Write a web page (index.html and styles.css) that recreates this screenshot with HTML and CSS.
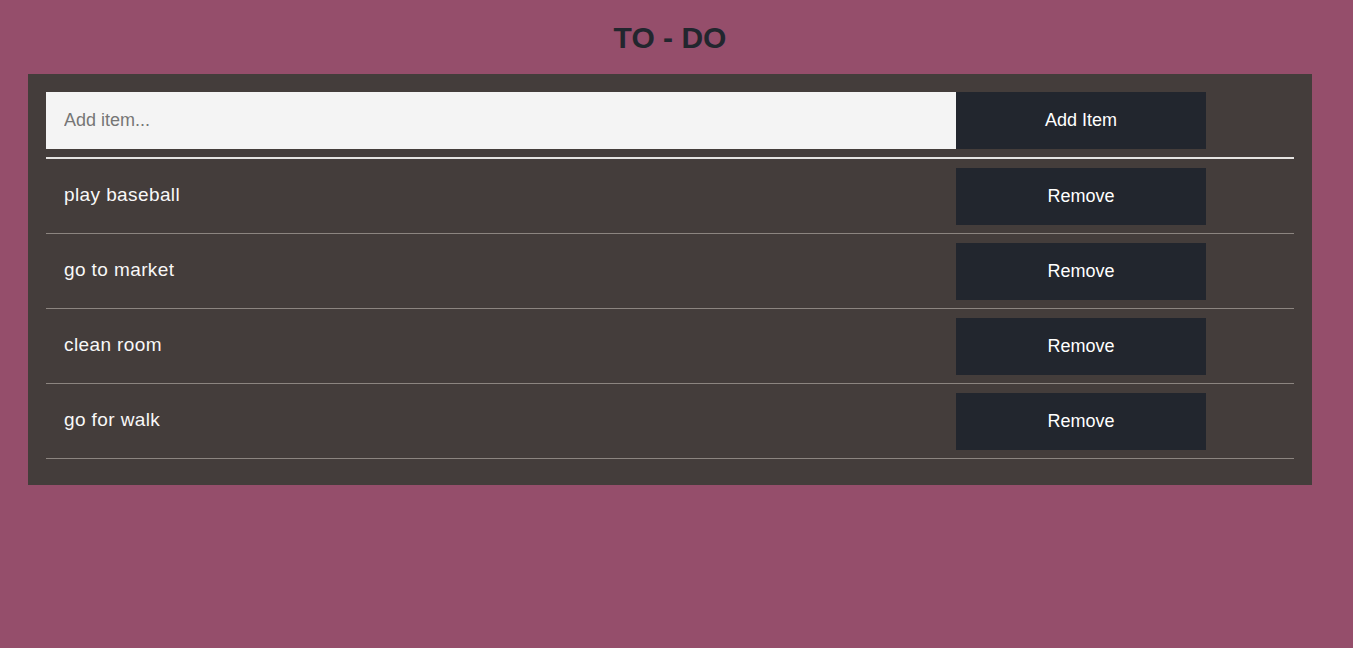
FILE: index.html
```html
<!DOCTYPE html>
<html lang="en">
<head>
<meta charset="utf-8">
<title>TO - DO</title>
<link rel="stylesheet" href="styles.css">
</head>
<body>
  <main class="page">
    <h1 class="title">TO - DO</h1>
    <div class="panel">
      <form class="add-row" onsubmit="return false">
        <input class="add-input" type="text" placeholder="Add item...">
        <button class="btn" type="submit">Add Item</button>
      </form>
      <ul class="list">
        <li class="item"><span class="item-text">play baseball</span><button class="btn">Remove</button></li>
        <li class="item"><span class="item-text">go to market</span><button class="btn">Remove</button></li>
        <li class="item"><span class="item-text">clean room</span><button class="btn">Remove</button></li>
        <li class="item"><span class="item-text">go for walk</span><button class="btn">Remove</button></li>
      </ul>
    </div>
  </main>
</body>
</html>
```

FILE: styles.css
```css
html, body {
  margin: 0;
  padding: 0;
}
body {
  background: #954e6b;
  font-family: "Liberation Sans", Arial, sans-serif;
  min-height: 648px;
}
.page {
  margin: 0 41px 0 28px;
}
.title {
  margin: 0;
  padding: 21px 0 19px;
  font-size: 30px;
  line-height: 34px;
  font-weight: bold;
  color: #22262e;
  text-align: center;
}
.panel {
  background: #443d3b;
  padding: 18px 18px 26px;
}
.add-row {
  display: flex;
  margin: 0;
  padding-bottom: 8px;
  border-bottom: 2px solid #e6e4e2;
}
.add-input {
  width: 910px;
  height: 57px;
  box-sizing: border-box;
  border: none;
  outline: none;
  background: #f4f4f4;
  padding: 0 18px;
  font-family: "Liberation Sans", Arial, sans-serif;
  font-size: 18px;
  color: #333;
}
.add-input::placeholder {
  color: #767676;
}
.btn {
  width: 250px;
  height: 57px;
  border: none;
  background: #22262e;
  color: #ffffff;
  font-family: "Liberation Sans", Arial, sans-serif;
  font-size: 18px;
  padding: 0;
  cursor: pointer;
}
.list {
  list-style: none;
  margin: 0;
  padding: 0;
}
.item {
  display: flex;
  align-items: center;
  padding: 9px 0 8px;
  border-bottom: 1px solid #8c8580;
}
.item-text {
  width: 892px;
  padding-left: 18px;
  margin-bottom: 4px;
  color: #f8f8f8;
  font-size: 19px;
  letter-spacing: 0.4px;
}
```
